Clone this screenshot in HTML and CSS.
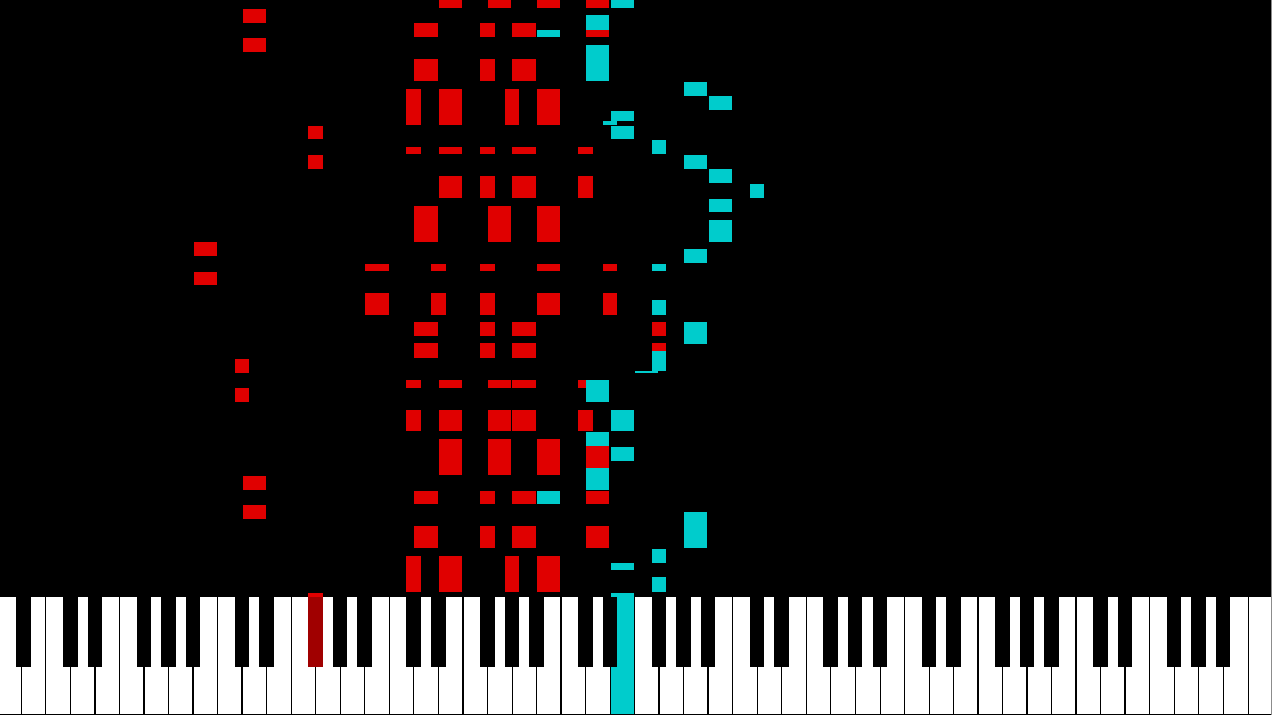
FILE: index.html
```html
<!DOCTYPE html>
<html lang="en">
<head>
    <meta charset="UTF-8">
    <meta name="viewport" content="width=device-width, initial-scale=1.0">
    <title>Piano Roll</title>
    <link rel="stylesheet" href="styles.css">
</head>
<body>
    <div class="stage">
        <!-- Falling notes, left hand first so the right hand sits on top -->
        <svg class="roll" width="1271" height="597" viewBox="0 0 1271 597">
            <g class="left-hand">
                <rect x="439" y="0" width="23" height="8"/>
                <rect x="488" y="0" width="23" height="8"/>
                <rect x="537" y="0" width="23" height="8"/>
                <rect x="586" y="0" width="23" height="8"/>
                <rect x="243" y="9" width="23" height="14"/>
                <rect x="414" y="23" width="24" height="14"/>
                <rect x="480" y="23" width="15" height="14"/>
                <rect x="512" y="23" width="24" height="14"/>
                <rect x="586" y="30" width="23" height="7"/>
                <rect x="243" y="38" width="23" height="14"/>
                <rect x="414" y="59" width="24" height="22"/>
                <rect x="480" y="59" width="15" height="22"/>
                <rect x="512" y="59" width="24" height="22"/>
                <rect x="406" y="89" width="15" height="36"/>
                <rect x="439" y="89" width="23" height="36"/>
                <rect x="505" y="89" width="14" height="36"/>
                <rect x="537" y="89" width="23" height="36"/>
                <rect x="308" y="126" width="15" height="13"/>
                <rect x="406" y="147" width="15" height="7"/>
                <rect x="439" y="147" width="23" height="7"/>
                <rect x="480" y="147" width="15" height="7"/>
                <rect x="512" y="147" width="24" height="7"/>
                <rect x="578" y="147" width="15" height="7"/>
                <rect x="308" y="155" width="15" height="14"/>
                <rect x="439" y="176" width="23" height="22"/>
                <rect x="480" y="176" width="15" height="22"/>
                <rect x="512" y="176" width="24" height="22"/>
                <rect x="578" y="176" width="15" height="22"/>
                <rect x="414" y="206" width="24" height="36"/>
                <rect x="488" y="206" width="23" height="36"/>
                <rect x="537" y="206" width="23" height="36"/>
                <rect x="194" y="242" width="23" height="14"/>
                <rect x="365" y="264" width="24" height="7"/>
                <rect x="431" y="264" width="15" height="7"/>
                <rect x="480" y="264" width="15" height="7"/>
                <rect x="537" y="264" width="23" height="7"/>
                <rect x="603" y="264" width="14" height="7"/>
                <rect x="194" y="272" width="23" height="13"/>
                <rect x="365" y="293" width="24" height="22"/>
                <rect x="431" y="293" width="15" height="22"/>
                <rect x="480" y="293" width="15" height="22"/>
                <rect x="537" y="293" width="23" height="22"/>
                <rect x="603" y="293" width="14" height="22"/>
                <rect x="414" y="322" width="24" height="14"/>
                <rect x="480" y="322" width="15" height="14"/>
                <rect x="512" y="322" width="24" height="14"/>
                <rect x="652" y="322" width="14" height="14"/>
                <rect x="414" y="343" width="24" height="15"/>
                <rect x="480" y="343" width="15" height="15"/>
                <rect x="512" y="343" width="24" height="15"/>
                <rect x="652" y="343" width="14" height="8"/>
                <rect x="235" y="359" width="14" height="14"/>
                <rect x="406" y="380" width="15" height="8"/>
                <rect x="439" y="380" width="23" height="8"/>
                <rect x="488" y="380" width="23" height="8"/>
                <rect x="512" y="380" width="24" height="8"/>
                <rect x="578" y="380" width="15" height="8"/>
                <rect x="235" y="388" width="14" height="14"/>
                <rect x="406" y="410" width="15" height="21"/>
                <rect x="439" y="410" width="23" height="21"/>
                <rect x="488" y="410" width="23" height="21"/>
                <rect x="512" y="410" width="24" height="21"/>
                <rect x="578" y="410" width="15" height="21"/>
                <rect x="439" y="439" width="23" height="36"/>
                <rect x="488" y="439" width="23" height="36"/>
                <rect x="537" y="439" width="23" height="36"/>
                <rect x="586" y="446" width="23" height="22"/>
                <rect x="243" y="476" width="23" height="14"/>
                <rect x="414" y="491" width="24" height="13"/>
                <rect x="480" y="491" width="15" height="13"/>
                <rect x="512" y="491" width="24" height="13"/>
                <rect x="586" y="491" width="23" height="13"/>
                <rect x="243" y="505" width="23" height="14"/>
                <rect x="414" y="526" width="24" height="22"/>
                <rect x="480" y="526" width="15" height="22"/>
                <rect x="512" y="526" width="24" height="22"/>
                <rect x="586" y="526" width="23" height="22"/>
                <rect x="406" y="556" width="15" height="36"/>
                <rect x="439" y="556" width="23" height="36"/>
                <rect x="505" y="556" width="14" height="36"/>
                <rect x="537" y="556" width="23" height="36"/>
                <rect x="308" y="593" width="15" height="4"/>
            </g>
            <g class="right-hand">
                <rect x="611" y="0" width="23" height="8"/>
                <rect x="586" y="15" width="23" height="15"/>
                <rect x="537" y="30" width="23" height="7"/>
                <rect x="586" y="45" width="23" height="36"/>
                <rect x="684" y="82" width="23" height="14"/>
                <rect x="709" y="96" width="23" height="14"/>
                <rect x="611" y="111" width="23" height="10"/>
                <rect x="603" y="121" width="14" height="4"/>
                <rect x="611" y="126" width="23" height="13"/>
                <rect x="652" y="140" width="14" height="14"/>
                <rect x="684" y="155" width="23" height="14"/>
                <rect x="709" y="169" width="23" height="14"/>
                <rect x="750" y="184" width="14" height="14"/>
                <rect x="709" y="199" width="23" height="13"/>
                <rect x="709" y="220" width="23" height="22"/>
                <rect x="684" y="249" width="23" height="14"/>
                <rect x="652" y="264" width="14" height="7"/>
                <rect x="652" y="300" width="14" height="15"/>
                <rect x="684" y="322" width="23" height="22"/>
                <rect x="652" y="351" width="14" height="20"/>
                <rect x="635" y="371" width="23" height="2"/>
                <rect x="586" y="380" width="23" height="22"/>
                <rect x="611" y="410" width="23" height="21"/>
                <rect x="586" y="432" width="23" height="14"/>
                <rect x="611" y="447" width="23" height="14"/>
                <rect x="586" y="468" width="23" height="22"/>
                <rect x="537" y="491" width="23" height="13"/>
                <rect x="684" y="512" width="23" height="36"/>
                <rect x="652" y="549" width="14" height="14"/>
                <rect x="611" y="563" width="23" height="7"/>
                <rect x="652" y="577" width="14" height="15"/>
                <rect x="611" y="593" width="23" height="4"/>
            </g>
        </svg>

        <!-- Keyboard -->
        <div class="keyboard">
            <div class="white-keys">
                <div class="white"></div><div class="white"></div><div class="white"></div><div class="white thick"></div>
                <div class="white"></div><div class="white thick"></div><div class="white"></div><div class="white thick"></div>
                <div class="white"></div><div class="white thick"></div><div class="white"></div><div class="white"></div>
                <div class="white"></div><div class="white"></div><div class="white"></div><div class="white"></div>
                <div class="white"></div><div class="white"></div><div class="white thick"></div><div class="white"></div>
                <div class="white"></div><div class="white"></div><div class="white thick"></div><div class="white"></div>
                <div class="white"></div><div class="white pressed"></div><div class="white thick"></div><div class="white"></div>
                <div class="white thick"></div><div class="white"></div><div class="white"></div><div class="white"></div>
                <div class="white"></div><div class="white"></div><div class="white"></div><div class="white"></div>
                <div class="white"></div><div class="white"></div><div class="white"></div><div class="white thick"></div>
                <div class="white"></div><div class="white thick"></div><div class="white"></div><div class="white thick"></div>
                <div class="white"></div><div class="white thick"></div><div class="white"></div><div class="white"></div>
                <div class="white"></div><div class="white"></div><div class="white"></div><div class="white"></div>
            </div>
            <svg class="black-keys" width="1271" height="70" viewBox="0 0 1271 70">
                <rect x="16" y="0" width="15" height="70"/>
                <rect x="63" y="0" width="15" height="70"/>
                <rect x="88" y="0" width="14" height="70"/>
                <rect x="137" y="0" width="14" height="70"/>
                <rect x="161" y="0" width="15" height="70"/>
                <rect x="186" y="0" width="14" height="70"/>
                <rect x="235" y="0" width="14" height="70"/>
                <rect x="259" y="0" width="15" height="70"/>
                <rect class="pressed" x="308" y="0" width="15" height="70"/>
                <rect x="333" y="0" width="14" height="70"/>
                <rect x="357" y="0" width="15" height="70"/>
                <rect x="406" y="0" width="15" height="70"/>
                <rect x="431" y="0" width="15" height="70"/>
                <rect x="480" y="0" width="15" height="70"/>
                <rect x="505" y="0" width="14" height="70"/>
                <rect x="529" y="0" width="15" height="70"/>
                <rect x="578" y="0" width="15" height="70"/>
                <rect x="603" y="0" width="14" height="70"/>
                <rect x="652" y="0" width="14" height="70"/>
                <rect x="676" y="0" width="15" height="70"/>
                <rect x="701" y="0" width="14" height="70"/>
                <rect x="750" y="0" width="14" height="70"/>
                <rect x="774" y="0" width="15" height="70"/>
                <rect x="823" y="0" width="15" height="70"/>
                <rect x="848" y="0" width="14" height="70"/>
                <rect x="873" y="0" width="14" height="70"/>
                <rect x="922" y="0" width="14" height="70"/>
                <rect x="946" y="0" width="15" height="70"/>
                <rect x="995" y="0" width="15" height="70"/>
                <rect x="1020" y="0" width="14" height="70"/>
                <rect x="1044" y="0" width="15" height="70"/>
                <rect x="1093" y="0" width="15" height="70"/>
                <rect x="1118" y="0" width="14" height="70"/>
                <rect x="1167" y="0" width="14" height="70"/>
                <rect x="1191" y="0" width="15" height="70"/>
                <rect x="1216" y="0" width="14" height="70"/>
            </svg>
        </div>
    </div>
</body>
</html>
```

FILE: styles.css
```css
/* Page */
body {
    margin: 0;
    background-color: #000;
    overflow: hidden;
}

.stage {
    display: flex;
    flex-direction: column;
    height: 715px;
    border-right: 1px solid #8c8c8c;
    box-sizing: border-box;
    overflow: hidden;
}

/* Falling notes */
.roll {
    display: block;
    flex: none;
}

.left-hand {
    fill: #e00000;
}

.right-hand {
    fill: #00cccc;
}

/* Keyboard */
.keyboard {
    position: relative;
    flex: none;
    height: 118px;
    overflow: hidden;
}

.white-keys {
    display: flex;
    height: 117px;
    margin-left: -2.6px;
    border-bottom: 1px solid #000;
}

.white {
    flex: 0 0 24.535px;
    box-sizing: border-box;
    background-color: #fff;
    border-right: 1px solid #000;
}

.white.thick {
    border-right-width: 2px;
}

.white.pressed {
    background-color: #00cccc;
}

.black-keys {
    position: absolute;
    top: 0;
    left: 0;
    fill: #000;
}

.black-keys .pressed {
    fill: #a00000;
}
```
